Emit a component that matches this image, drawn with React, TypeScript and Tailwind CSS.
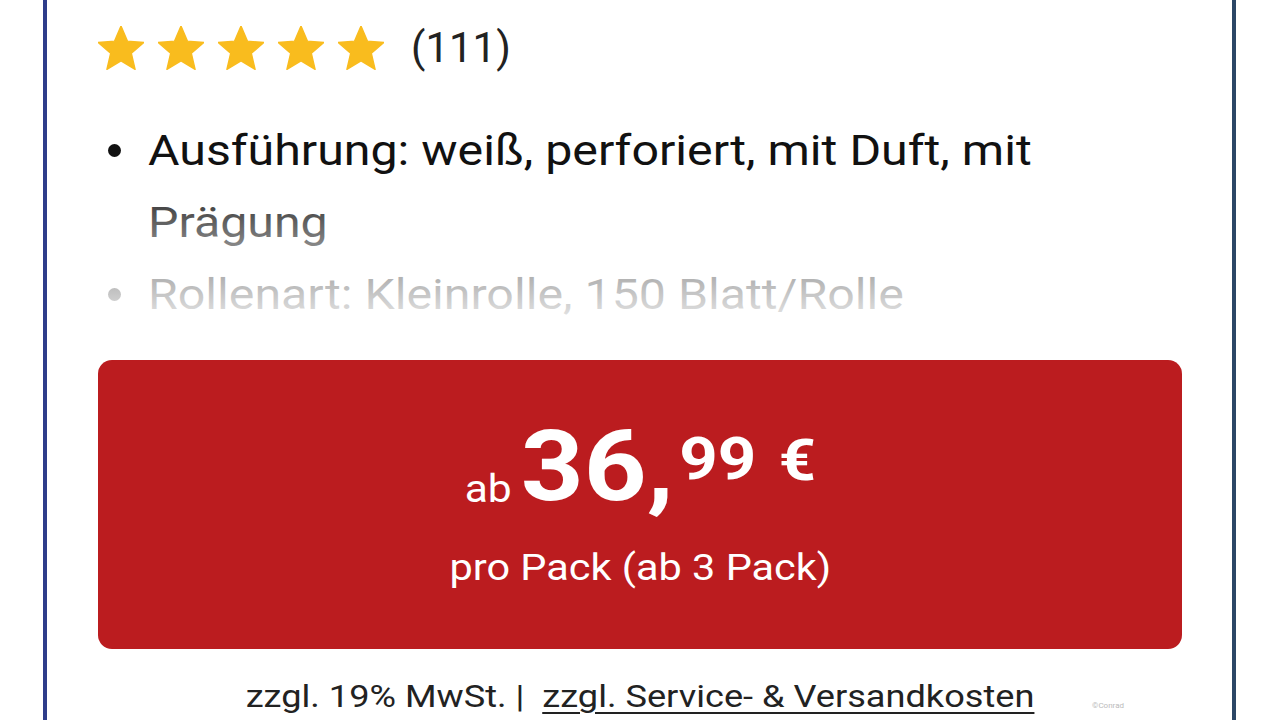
import React from "react";

const Star = () => (
  <svg viewBox="2 2 20 19.27" className="w-[46px] h-[44px]" aria-hidden>
    <path
      d="M12 17.27L18.18 21l-1.64-7.03L22 9.24l-7.19-.61L12 2 9.19 8.63 2 9.24l5.46 4.73L5.82 21z"
      fill="#f9bc1e"
      stroke="#f9bc1e"
      strokeWidth="0.6"
      strokeLinejoin="round"
    />
  </svg>
);

const Bullet = () => (
  <span className="w-[50px] shrink-0 flex items-start pl-[10px] pt-[29px]">
    <span className="block w-[13px] h-[13px] rounded-full bg-current" />
  </span>
);

export default function App() {
  return (
    <div
      className="w-[1280px] h-[720px] overflow-hidden bg-white"
      style={{ fontFamily: "Roboto, 'Noto Sans', sans-serif" }}
    >
      <div className="ml-[43px] w-[1193px] h-[720px] border-l-4 border-l-[#2e3d8a] border-r-4 border-r-[#2c4766] pl-[51px] pr-[50px]">
        {/* rating */}
        <div className="flex items-center pt-[24px] h-[72px]">
          <div className="flex gap-[14px]">
            <Star />
            <Star />
            <Star />
            <Star />
            <Star />
          </div>
          <span className="ml-[27px] text-[42px] leading-none text-[#222]">(111)</span>
        </div>

        {/* features */}
        <div className="relative mt-[43px] h-[216px] overflow-hidden">
          <ul className="text-[42px] leading-[72px] text-[#111]">
            <li className="flex">
              <Bullet />
              <span className="origin-left scale-x-[1.15] whitespace-nowrap">
                Ausführung: weiß, perforiert, mit Duft, mit
                <br />
                Prägung
              </span>
            </li>
            <li className="flex">
              <Bullet />
              <span className="origin-left scale-x-[1.15] whitespace-nowrap">
                Rollenart: Kleinrolle, 150 Blatt/Rolle
              </span>
            </li>
          </ul>
          <div className="absolute inset-x-0 top-[60px] bottom-0 bg-linear-to-b from-white/0 via-white/55 to-white/95" />
        </div>

        {/* price box */}
        <div className="mt-[29px] h-[289px] rounded-[14px] bg-[#bb1c1f] flex flex-col items-center justify-center pb-[8px] text-white">
          <div className="flex flex-col items-center scale-x-[1.12]">
            <div className="flex items-start">
              <span className="self-end text-[38px] leading-none mb-[11px] mr-[8px]">ab</span>
              <span className="text-[98px] font-bold leading-[104px]">36,</span>
              <span className="text-[60px] font-bold leading-none mt-[14px] ml-[5px]">99</span>
              <span className="text-[58px] font-bold leading-none mt-[16px] ml-[20px]">€</span>
            </div>
            <div className="text-[37px] leading-none mt-[30px]">pro Pack (ab 3 Pack)</div>
          </div>
        </div>

        {/* footer */}
        <div className="relative flex justify-center mt-[31px] text-[32px] leading-none text-[#222]">
          <span className="scale-x-[1.13] whitespace-nowrap">
            zzgl. 19% MwSt. |&nbsp; <span className="underline underline-offset-[5px] decoration-2">zzgl. Service- &amp; Versandkosten</span>
          </span>
          <span className="absolute right-[58px] top-[22px] text-[8px] text-[#bbb]">©Conrad</span>
        </div>
      </div>
    </div>
  );
}
